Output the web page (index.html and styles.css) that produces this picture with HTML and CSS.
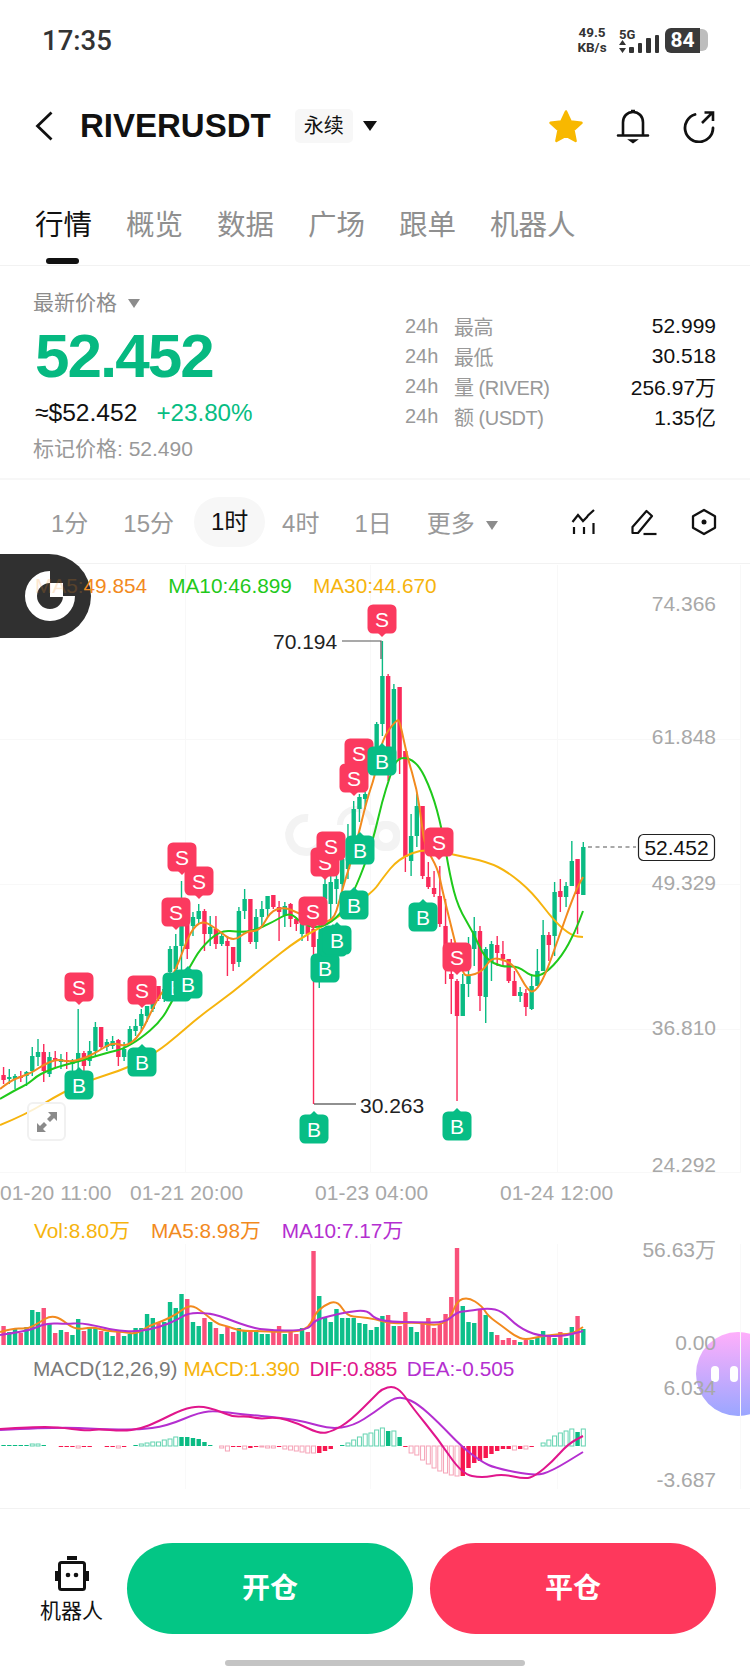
FILE: index.html
```html
<!DOCTYPE html>
<html lang="zh-CN">
<head>
    <meta charset="UTF-8">
    <meta name="viewport" content="width=device-width, initial-scale=1.0">
    <title>RIVERUSDT</title>
    <link rel="stylesheet" href="styles.css">
</head>
<body>
    <div class="statusbar">
        <span class="clock">17:35</span>
        <div class="status-right">
            <div class="netspeed"><span>49.5</span><span>KB/s</span></div>
            <div class="cell">
                <span class="cell-label">5G</span>
                <div class="cell-row">
                    <svg width="7" height="13" viewBox="0 0 7 13"><path d="M3.5 0 7 5H0zM0 8h7l-3.500 5z" fill="#333"/></svg>
                    <i class="sig s1"></i><i class="sig s2"></i><i class="sig s3"></i><i class="sig s4"></i>
                </div>
            </div>
            <div class="battery"><span class="battery-fill">84</span><span class="battery-rest"></span></div>
        </div>
    </div>

    <header class="header">
        <svg class="back" width="18" height="30" viewBox="0 0 18 30"><path d="M16.500 1.500 2.500 15l14 13.500" fill="none" stroke="#111" stroke-width="2.800"/></svg>
        <h1 class="symbol">RIVERUSDT</h1>
        <span class="tag">永续</span>
        <i class="caret"></i>
        <div class="header-icons">
            <svg width="36" height="34" viewBox="0 0 36 34"><path d="M18 2.500l4.700 10 10.800 1.300-8 7.400 2.100 10.800L18 26.700 8.400 32l2.100-10.800-8-7.400 10.800-1.300z" fill="#f8b800" stroke="#f8b800" stroke-width="2.500" stroke-linejoin="round"/></svg>
            <svg width="34" height="36" viewBox="0 0 34 36"><path d="M7 27V14.500C7 8.500 11 4 17 4s10 4.500 10 10.500V27M2 27.500h30" fill="none" stroke="#111" stroke-width="2.600" stroke-linecap="round"/><path d="M15 2.500h4M13.500 32h7l-3.500 2.500z" fill="#111" stroke="#111" stroke-width="1.500"/></svg>
            <svg width="34" height="34" viewBox="0 0 34 34"><path d="M13 5.500A14 14 0 1 0 31 19" fill="none" stroke="#111" stroke-width="2.800" stroke-linecap="round"/><path d="M20 14 30 4M22.500 3.500h8.500v8.500" fill="none" stroke="#111" stroke-width="2.600"/></svg>
        </div>
    </header>

    <nav class="tabs">
        <a class="tab active">行情</a>
        <a class="tab">概览</a>
        <a class="tab">数据</a>
        <a class="tab">广场</a>
        <a class="tab">跟单</a>
        <a class="tab">机器人</a>
    </nav>

    <section class="summary">
        <div class="price-col">
            <div class="price-label">最新价格 <i class="caret small"></i></div>
            <div class="price">52.452</div>
            <div class="price-sub"><span>≈$52.452</span><span class="up">+23.80%</span></div>
            <div class="mark">标记价格: 52.490</div>
        </div>
        <div class="stats">
            <div class="stat"><span class="stat-h">24h</span><span class="stat-name">最高</span><span class="stat-val">52.999</span></div>
            <div class="stat"><span class="stat-h">24h</span><span class="stat-name">最低</span><span class="stat-val">30.518</span></div>
            <div class="stat"><span class="stat-h">24h</span><span class="stat-name">量 (RIVER)</span><span class="stat-val">256.97万</span></div>
            <div class="stat"><span class="stat-h">24h</span><span class="stat-name">额 (USDT)</span><span class="stat-val">1.35亿</span></div>
        </div>
    </section>

    <section class="intervals">
        <a class="interval i1">1分</a>
        <a class="interval i2">15分</a>
        <a class="interval i3 active">1时</a>
        <a class="interval i4">4时</a>
        <a class="interval i5">1日</a>
        <a class="interval i6">更多 <i class="caret small"></i></a>
        <div class="tools">
            <svg width="26" height="26" viewBox="0 0 26 26"><path d="M1.500 13 7 6l5 6 4-4 1-1.500L23 1" fill="none" stroke="#111" stroke-width="2.200"/><path d="M3 18v7M13 18v7M22.500 14v11" stroke="#111" stroke-width="2.200"/></svg>
            <svg width="28" height="28" viewBox="0 0 28 28"><path d="M2.500 25v-6L16.500 3l5.500 5-14 17z" fill="none" stroke="#111" stroke-width="2.200" stroke-linejoin="round"/><path d="M13.500 26h13" stroke="#111" stroke-width="2.200"/></svg>
            <svg width="26" height="28" viewBox="0 0 26 28"><path d="M13 2 24 8.300v11.400L13 26 2 19.700V8.300z" fill="none" stroke="#111" stroke-width="2.300" stroke-linejoin="round"/><circle cx="13" cy="14" r="2.500" fill="#111"/></svg>
        </div>
    </section>

    <section class="chart" id="chart">
        <svg class="canvas" id="canvas" width="750" height="944" viewBox="0 565 750 944"></svg>
        <div class="side-btn">
            <svg width="60" height="60" viewBox="0 0 60 60"><path d="M30 11A19 19 0 1 0 49 30" fill="none" stroke="#fff" stroke-width="12"/><rect x="30" y="17" width="13" height="14" fill="#fff"/></svg>
        </div>
        <div class="legend legend-ma">
            <span class="c-ma5"><span class="dim">MA5:</span>49.854</span><span class="c-ma10">MA10:46.899</span><span class="c-ma30">MA30:44.670</span>
        </div>
        <div class="legend legend-vol">
            <span class="c-vol">Vol:8.80万</span><span class="c-ma5">MA5:8.98万</span><span class="c-purple">MA10:7.17万</span>
        </div>
        <div class="legend legend-macd">
            <span class="c-grey">MACD(12,26,9)</span><span class="c-vol">MACD:1.390</span><span class="c-dif">DIF:0.885</span><span class="c-purple">DEA:-0.505</span>
        </div>
        <div class="expand">
            <svg width="22" height="22" viewBox="0 0 22 22"><path d="M12 1h9v9l-3-3-4 4-3-3 4-4zM10 21H1v-9l3 3 4-4 3 3-4 4z" fill="#8a8a8a"/></svg>
        </div>
        <div class="bubble"><i></i><i></i></div>
    </section>

    <footer class="actions">
        <div class="robot">
            <svg width="34" height="36" viewBox="0 0 34 36"><rect x="12" y="1" width="10" height="4" fill="#111"/><rect x="4.500" y="7.500" width="25" height="27" rx="2" fill="none" stroke="#111" stroke-width="3"/><path d="M1.500 16v10M32.500 16v10" stroke="#111" stroke-width="3"/><circle cx="13" cy="20" r="2.300" fill="#111"/><circle cx="21" cy="20" r="2.300" fill="#111"/></svg>
            <span>机器人</span>
        </div>
        <a class="trade open">开仓</a>
        <a class="trade close">平仓</a>
    </footer>
    <div class="homebar"></div>

    <script src="chart.js"></script>
</body>
</html>
```

FILE: styles.css
```css
* {
    box-sizing: border-box;
}
body {
    margin: 0;
    width: 750px;
    height: 1667px;
    overflow: hidden;
    background-color: #fff;
    color: #111;
    font-family: "Liberation Sans", "Noto Sans CJK SC", sans-serif;
    position: relative;
}
.statusbar {
    height: 80px;
    padding: 0 42px;
    display: flex;
    justify-content: space-between;
    align-items: center;
}
.clock {
    font-family: Roboto, sans-serif;
    font-size: 27.500px;
    font-weight: 500;
    color: #333;
}
.status-right {
    display: flex;
    align-items: center;
}
.netspeed {
    display: flex;
    flex-direction: column;
    align-items: center;
    font-family: Roboto, sans-serif;
    font-size: 13.500px;
    font-weight: 700;
    line-height: 15px;
    color: #333;
    width: 30px;
}
.cell {
    margin-left: 12px;
    width: 42px;
}
.cell-label {
    display: block;
    font-family: Roboto, sans-serif;
    font-size: 13px;
    font-weight: 700;
    line-height: 13px;
    color: #333;
}
.cell-row {
    display: flex;
    align-items: flex-end;
    gap: 4px;
    height: 13px;
    margin-top: -1px;
}
.cell-row svg {
    margin-right: -1px;
}
.sig {
    display: block;
    width: 4.500px;
    background-color: #333;
    border-radius: 1px;
}
.s1 { height: 6px; }
.s2 { height: 10px; }
.s3 { height: 15px; }
.s4 { height: 18px; }
.battery {
    display: flex;
    align-items: center;
    margin-left: 4px;
}
.battery-fill {
    width: 35px;
    height: 25px;
    background-color: #3a3a3a;
    border-radius: 6px 0 0 6px;
    color: #fff;
    font-family: Roboto, sans-serif;
    font-size: 21px;
    font-weight: 700;
    line-height: 25px;
    text-align: center;
}
.battery-rest {
    width: 8px;
    height: 22px;
    background-color: #bdbdbd;
    border-radius: 0 6px 6px 0;
}
.header {
    height: 92px;
    padding: 0 34px 0 35px;
    display: flex;
    align-items: center;
}
.back {
    margin-right: 27px;
}
.symbol {
    margin: 0;
    font-size: 33px;
    font-weight: 700;
    letter-spacing: 0;
}
.tag {
    margin-left: 24px;
    width: 58px;
    height: 34px;
    line-height: 34px;
    text-align: center;
    background-color: #f7f7f7;
    border-radius: 5px;
    font-size: 20px;
}
.caret {
    display: inline-block;
    width: 0;
    height: 0;
    border-left: 7px solid transparent;
    border-right: 7px solid transparent;
    border-top: 10px solid #111;
}
.header .caret {
    margin-left: 10px;
}
.caret.small {
    border-left-width: 6.500px;
    border-right-width: 6.500px;
    border-top: 9px solid #8c8c8c;
    margin-left: 5px;
    vertical-align: 2px;
}
.header-icons {
    margin-left: auto;
    display: flex;
    align-items: center;
    gap: 32px;
}
.tabs {
    height: 94px;
    padding: 35px 0 0 35px;
    display: flex;
    gap: 34px;
    border-bottom: 1px solid #f2f2f2;
}
.tab {
    position: relative;
    font-size: 28.500px;
    line-height: 36px;
    color: #8f8f8f;
}
.tab.active {
    color: #111;
}
.tab.active::after {
    content: "";
    position: absolute;
    left: 11px;
    top: 51px;
    width: 33px;
    height: 6px;
    border-radius: 3px;
    background-color: #111;
}
.summary {
    height: 214px;
    padding-left: 33px;
    display: flex;
    border-bottom: 2px solid #f7f7f7;
}
.price-col {
    width: 372px;
    padding-top: 24px;
}
.price-label {
    font-size: 21px;
    line-height: 26px;
    color: #8c8c8c;
}
.price {
    margin: 8px 0 0 2px;
    font-size: 62px;
    font-weight: 700;
    line-height: 64px;
    letter-spacing: -2px;
    color: #06b981;
}
.price-sub {
    margin: 10px 0 0 2px;
    display: flex;
    gap: 19px;
    font-size: 24.600px;
    line-height: 30px;
}
.up {
    font-size: 24.200px;
    color: #07bd83;
}
.mark {
    margin-top: 8px;
    font-size: 21px;
    line-height: 26px;
    color: #999;
}
.stats {
    width: 311px;
    padding-top: 45px;
}
.stat {
    height: 30px;
    display: flex;
    align-items: center;
    font-size: 20px;
}
.stat-h {
    width: 49px;
    color: #999;
}
.stat-name {
    color: #999;
    letter-spacing: -0.5px;
}
.stat-val {
    margin-left: auto;
    font-size: 21px;
    color: #111;
}
.intervals {
    height: 84px;
    display: flex;
    align-items: center;
    padding: 0 33px 0 0;
    border-bottom: 1px solid #f2f2f2;
}
.interval {
    font-size: 24px;
    color: #999;
    text-align: center;
}
.i1 { margin-left: 51px; }
.i2 { margin-left: 35px; }
.i3 {
    margin-left: 20px;
    width: 71px;
    height: 50px;
    line-height: 50px;
    border-radius: 25px;
    background-color: #f7f7f7;
}
.i3.active {
    color: #111;
}
.i4 { margin-left: 17px; }
.i5 { margin-left: 35px; }
.i6 { margin-left: 35px; }
.tools {
    margin-left: auto;
    display: flex;
    align-items: center;
    gap: 33px;
}
.chart {
    position: relative;
    height: 944px;
}
.canvas {
    position: absolute;
    left: 0;
    top: 0;
}
.canvas text {
    font-family: "Liberation Sans", "Noto Sans CJK SC", sans-serif;
}
.legend {
    position: absolute;
    left: 35px;
    display: flex;
    font-size: 20.800px;
    line-height: 26px;
}
.legend-ma {
    top: 9px;
    gap: 21px;
}
.legend-vol {
    top: 654px;
    left: 34px;
    gap: 21px;
}
.legend-macd {
    top: 792px;
    left: 33px;
    gap: 6px;
}
.legend-macd .c-vol {
    letter-spacing: -0.3px;
}
.legend-macd .c-dif {
    margin-left: 4px;
    letter-spacing: -0.45px;
}
.legend-macd .c-purple {
    margin-left: 4px;
}
.dim {
    opacity: 0.2;
}
.c-ma5 { color: #f28a1e; }
.c-ma10 { color: #1fc91b; }
.c-ma30, .c-vol { color: #f6b40e; }
.c-purple { color: #b42fd0; }
.c-grey { color: #7a7a7a; }
.c-dif { color: #e0168c; }
.side-btn {
    position: absolute;
    left: 0;
    top: -10px;
    width: 91px;
    height: 84px;
    padding: 12px 0 0 20px;
    background-color: #303030;
    border-radius: 0 42px 42px 0;
}
.expand {
    position: absolute;
    left: 27px;
    top: 538px;
    width: 39px;
    height: 39px;
    display: flex;
    align-items: center;
    justify-content: center;
    background-color: rgba(255, 255, 255, 0.8);
    border: 2px solid #f1f1f1;
    border-radius: 6px;
}
.bubble {
    position: absolute;
    left: 696px;
    top: 768px;
    width: 84px;
    height: 84px;
    padding-left: 15px;
    display: flex;
    align-items: center;
    gap: 11px;
    border-radius: 50%;
    background: linear-gradient(#ffaffb, #9aa6ff);
    z-index: -1;
}
.bubble i {
    width: 8px;
    height: 16px;
    border-radius: 4px;
    background-color: #fff;
}
.actions {
    height: 158px;
    padding: 34px 33px 0 0;
    display: flex;
    align-items: flex-start;
    border-top: 1px solid #f2f2f2;
}
.robot {
    width: 127px;
    display: flex;
    flex-direction: column;
    align-items: center;
    padding-top: 12px;
    font-size: 21px;
    line-height: 26px;
    margin-left: 8px;
    margin-right: -8px;
}
.robot svg {
    margin: 0 0 7px 0;
}
.trade {
    width: 286px;
    height: 91px;
    line-height: 91px;
    text-align: center;
    border-radius: 46px;
    color: #fff;
    font-size: 28px;
    font-weight: 700;
}
.trade.open {
    background-color: #03c685;
}
.trade.close {
    background-color: #fe385c;
    margin-left: 17px;
}
.homebar {
    position: absolute;
    left: 225px;
    bottom: 1px;
    width: 300px;
    height: 6px;
    border-radius: 3px;
    background-color: #c4c4c4;
}
```

FILE: chart.js
```js
// all y values here are page pixels, the svg viewBox starts at the chart top
const canvas = document.getElementById('canvas');
const NS = 'http://www.w3.org/2000/svg';

const GREEN = '#0abb83';
const RED = '#fa2a5a';

function add(tag, attrs, text) {
    const el = document.createElementNS(NS, tag);
    for (const k in attrs) el.setAttribute(k, attrs[k]);
    if (text) el.textContent = text;
    canvas.appendChild(el);
    return el;
}

function xAt(i) {
    return 583.3 - (102 - i) * 5.74;
}

function line(points, color, width) {
    // smooth a little so the averages do not look like zigzags
    let d = 'M' + points[0].join(' ');
    for (let i = 1; i < points.length - 1; i++) {
        const mx = (points[i][0] + points[i + 1][0]) / 2;
        const my = (points[i][1] + points[i + 1][1]) / 2;
        d += ` Q${points[i][0]} ${points[i][1]} ${mx} ${my}`;
    }
    d += ' L' + points[points.length - 1].join(' ');
    add('path', { d, fill: 'none', stroke: color, 'stroke-width': width, 'stroke-linejoin': 'round' });
}

// wick top, body top, body bottom, wick bottom, colour
const candles = [
    [1076,1078,1082,1090,'g'],[1068,1076,1081,1085,'r'],[1070,1078,1080,1085,'g'],[1075,1077,1080,1090,'g'],
    [1072,1077,1079,1083,'r'],[1072,1073,1077,1087,'g'],[1048,1057,1072,1077,'g'],[1040,1053,1058,1067,'g'],
    [1045,1053,1072,1083,'r'],[1053,1058,1075,1078,'g'],[1052,1059,1062,1068,'r'],[1055,1060,1063,1070,'g'],
    [1053,1061,1063,1070,'r'],[1060,1062,1065,1072,'g'],[1010,1054,1062,1072,'g'],[1052,1054,1067,1072,'r'],
    [1042,1052,1062,1067,'g'],[1023,1028,1052,1057,'g'],[1028,1028,1048,1050,'r'],[1040,1043,1048,1052,'g'],
    [1037,1042,1047,1050,'g'],[1040,1041,1058,1067,'r'],[1043,1050,1058,1062,'g'],[1027,1030,1045,1045,'g'],
    [1020,1027,1032,1037,'g'],[1010,1015,1027,1033,'g'],[1007,1007,1017,1023,'g'],[993,995,1010,1013,'g'],
    [987,987,1000,1002,'r'],[985,990,1000,1003,'g'],[947,950,973,975,'g'],[935,947,970,975,'g'],
    [882,927,947,975,'g'],[910,913,950,960,'r'],[913,918,927,937,'g'],[905,912,920,925,'g'],
    [910,912,935,952,'r'],[917,928,935,947,'g'],[917,930,945,950,'r'],[935,937,945,947,'g'],
    [937,942,947,977,'r'],[948,948,965,972,'r'],[908,912,963,968,'g'],[890,900,912,920,'g'],
    [900,900,943,945,'r'],[910,918,943,950,'g'],[902,910,918,928,'g'],[897,897,910,918,'g'],
    [896,896,908,910,'r'],[902,908,913,942,'r'],[903,907,917,928,'g'],[904,905,920,928,'r'],
    [918,920,925,932,'r'],[920,925,935,942,'g'],[917,927,935,942,'r'],[927,930,948,1105,'r'],
    [920,940,965,989,'g'],[870,885,900,915,'g'],[860,883,905,920,'g'],[875,880,890,905,'g'],
    [855,860,885,905,'g'],[825,840,870,880,'g'],[802,810,837,850,'g'],[795,798,810,823,'g'],
    [793,795,800,810,'g'],[745,750,770,775,'g'],[723,725,748,752,'g'],[642,677,725,737,'g'],
    [675,677,765,782,'r'],[685,690,760,772,'g'],[688,688,760,775,'r'],[752,752,858,873,'r'],
    [815,837,862,877,'g'],[795,807,837,848,'g'],[807,807,877,880,'r'],[863,878,888,890,'r'],
    [872,889,895,898,'r'],[867,897,925,928,'r'],[900,927,947,985,'r'],[940,975,980,1015,'r'],
    [980,982,1017,1102,'r'],[975,985,1017,1017,'g'],[938,977,985,998,'g'],[918,932,950,967,'g'],
    [927,932,997,1012,'r'],[948,950,998,1024,'g'],[942,945,963,982,'g'],[937,946,954,967,'r'],
    [942,955,960,967,'r'],[960,960,982,984,'r'],[972,982,997,997,'r'],[988,993,997,1003,'g'],
    [990,994,1008,1017,'r'],[977,987,1010,1011,'g'],[950,972,987,987,'g'],[921,936,972,972,'g'],
    [933,936,946,962,'r'],[883,893,937,957,'g'],[880,892,898,913,'r'],[883,887,898,908,'g'],
    [842,862,887,887,'g'],[860,860,895,935,'r'],[843,848,896,896,'g']
];

// top of each volume bar
const volumes = [
    1328,1327,1333,1330,1334,1328,1311,1313,1309,1325,1334,1331,1333,1336,1320,1332,1329,1329,1332,1333,
    1337,1333,1337,1335,1329,1329,1315,1319,1324,1323,1303,1309,1295,1300,1323,1327,1319,1323,1329,1335,
    1327,1333,1329,1331,1331,1331,1335,1335,1331,1327,1335,1333,1335,1329,1333,1252,1297,1319,1323,1310,
    1319,1319,1319,1324,1325,1331,1328,1317,1316,1327,1327,1313,1328,1333,1325,1319,1329,1325,1315,1298,
    1249,1307,1323,1324,1310,1316,1333,1336,1341,1339,1341,1343,1341,1341,1339,1332,1337,1339,1333,1339,
    1328,1317,1330
];

// macd bars: height (+ up), filled?
const macd = [
    [1,1],[1,1],[1,1],[1,1],[1,1],[1,1],[2,0],[2,0],[1,1],[0,0],[0,0],[-1,1],[-1,1],[-1,1],[-2,0],[-1,1],
    [-1,1],[0,0],[0,0],[-1,1],[-1,1],[-2,0],[-1,1],[0,0],[1,1],[2,0],[3,0],[4,0],[4,0],[6,0],[7,0],[9,0],
    [9,1],[9,1],[8,1],[7,1],[4,1],[1,1],[0,0],[-2,0],[-5,0],[-1,1],[-1,1],[-3,0],[-2,1],[-1,1],[-1,0],
    [-2,0],[-2,0],[-1,1],[-3,0],[-4,0],[-5,0],[-6,0],[-7,0],[-7,0],[-7,1],[-5,1],[-3,1],[0,0],[1,1],[3,0],
    [6,0],[9,0],[12,0],[13,0],[16,0],[18,0],[15,1],[15,0],[9,1],[-1,1],[-7,0],[-9,0],[-14,0],[-18,0],
    [-22,0],[-25,0],[-27,0],[-29,0],[-30,0],[-30,1],[-22,1],[-17,1],[-15,1],[-12,1],[-8,1],[-5,1],[-3,1],
    [-3,1],[-4,0],[-3,1],[-3,0],[-1,1],[0,0],[3,0],[6,0],[10,0],[13,0],[15,0],[17,0],[14,1],[17,0]
];

const ma5 = [[0,1090],[10,1082],[23,1077],[33,1073],[43,1066],[57,1060],[68,1063],[83,1060],[97,1053],[113,1043],[125,1048],[140,1037],[157,1000],[170,983],[180,960],[190,933],[202,921],[217,930],[233,943],[247,932],[260,932],[270,913],[283,908],[297,913],[313,923],[333,923],[340,900],[343,888],[355,850],[367,800],[375,777],[382,740],[397,720],[400,723],[407,757],[417,790],[422,827],[425,847],[438,870],[442,890],[455,943],[463,975],[468,977],[482,973],[492,958],[507,962],[515,968],[528,992],[535,993],[545,977],[557,943],[575,893],[583,878]];
const ma10 = [[0,1100],[17,1090],[28,1085],[37,1077],[45,1073],[57,1068],[80,1062],[93,1058],[110,1053],[123,1050],[140,1040],[160,1023],[172,1003],[182,980],[190,968],[200,950],[220,931],[240,933],[253,932],[273,923],[290,913],[300,923],[317,930],[337,920],[353,895],[367,860],[375,833],[382,803],[390,777],[398,757],[417,762],[432,793],[442,830],[450,877],[458,908],[473,933],[485,960],[502,968],[518,967],[532,978],[545,975],[562,957],[575,933],[583,912]];
const ma30 = [[0,1126],[25,1116],[63,1093],[93,1080],[128,1069],[157,1053],[177,1037],[200,1017],[233,993],[263,968],[300,939],[333,922],[373,893],[382,880],[398,860],[425,849],[455,856],[488,863],[508,873],[532,893],[555,923],[572,937],[583,938]];
const volMa5 = [[0,1333],[13,1329],[28,1330],[40,1323],[50,1317],[60,1319],[75,1331],[93,1328],[107,1332],[123,1333],[137,1335],[148,1327],[163,1322],[177,1315],[190,1305],[203,1313],[217,1325],[227,1327],[240,1332],[260,1332],[277,1333],[307,1332],[315,1315],[323,1307],[337,1301],[347,1317],[360,1318],[375,1320],[392,1325],[415,1323],[438,1327],[450,1320],[457,1302],[468,1298],[482,1307],[488,1317],[502,1327],[515,1337],[525,1341],[542,1337],[562,1335],[572,1335],[583,1328]];
const volMa10 = [[0,1336],[27,1332],[37,1328],[48,1324],[67,1325],[80,1324],[97,1327],[113,1331],[137,1333],[160,1328],[177,1321],[188,1314],[207,1314],[220,1317],[233,1322],[247,1327],[263,1331],[307,1332],[315,1321],[330,1317],[347,1313],[367,1311],[375,1320],[392,1323],[415,1323],[445,1324],[457,1313],[468,1312],[488,1309],[502,1312],[518,1328],[538,1337],[562,1337],[572,1335],[583,1332]];
const dif = [[0,1430],[33,1428],[57,1428],[87,1432],[97,1430],[123,1432],[140,1430],[157,1423],[183,1410],[200,1407],[217,1411],[233,1418],[247,1417],[260,1420],[277,1418],[297,1424],[320,1435],[333,1432],[350,1422],[375,1397],[382,1390],[393,1387],[402,1393],[412,1408],[438,1440],[462,1475],[482,1479],[502,1475],[525,1480],[535,1477],[552,1463],[568,1445],[583,1437]];
const dea = [[0,1431],[57,1428],[100,1430],[137,1431],[167,1427],[200,1413],[217,1412],[240,1415],[283,1419],[307,1423],[330,1430],[353,1427],[375,1413],[392,1400],[403,1398],[418,1405],[438,1423],[462,1448],[482,1463],[495,1469],[535,1477],[552,1472],[583,1453]];

// x, y, letter. order matters, later ones sit on top
const marks = [
    [382,620,'S'],[359,754,'S'],[354,779,'S'],[325,863,'S'],[331,847,'S'],[182,858,'S'],[199,882,'S'],
    [176,913,'S'],[79,988,'S'],[177,988,'B'],[188,985,'B'],[142,991,'S'],[79,1086,'B'],[142,1063,'B'],
    [314,1130,'B'],[325,969,'B'],[333,943,'B'],[337,941,'B'],[313,912,'S'],[354,906,'B'],[360,851,'B'],[382,762,'B'],
    [423,918,'B'],[439,843,'S'],[457,958,'S'],[457,1127,'B']
];

function drawGrid() {
    [740, 885, 1030, 1173].forEach(y => {
        add('rect', { x: 0, y, width: 740, height: 1, fill: '#f8f8f8' });
    });
    [185, 370, 557, 740].forEach(x => {
        add('rect', { x, y: 566, width: 1, height: 608, fill: '#f8f8f8' });
        add('rect', { x, y: 1245, width: 1, height: 245, fill: '#f9f9f9' });
    });
    // watermark
    add('path', { d: 'M308 819A17 17 0 1 0 320 846', fill: 'none', stroke: '#f3f3f3', 'stroke-width': 8 });
    add('path', { d: 'M340 826A14 14 0 0 1 372 826', fill: 'none', stroke: '#f3f3f3', 'stroke-width': 6 });
    add('rect', { x: 372, y: 822, width: 28, height: 30, rx: 12, fill: '#f3f3f3' });
    add('circle', { cx: 386, cy: 837, r: 7, fill: '#fff' });
}

function drawCandles() {
    candles.forEach((c, i) => {
        const x = xAt(i);
        const color = c[4] === 'g' ? GREEN : RED;
        add('rect', { x: x - 0.7, y: c[0], width: 1.4, height: c[3] - c[0], fill: color });
        add('rect', { x: x - 2.2, y: c[1], width: 4.4, height: Math.max(c[2] - c[1], 2), fill: color });
    });
    line(ma30, '#f6b40e', 2);
    line(ma10, '#1fc91b', 2);
    line(ma5, '#f28a1e', 2);
}

function drawCallouts() {
    add('path', { d: 'M342 642H381V660', fill: 'none', stroke: '#555', 'stroke-width': 1.2 });
    add('path', { d: 'M314 1105H356', fill: 'none', stroke: '#222', 'stroke-width': 1.2 });
    add('text', { x: 273, y: 650, 'font-size': 21, fill: '#222' }, '70.194');
    add('text', { x: 360, y: 1114, 'font-size': 21, fill: '#222' }, '30.263');
    add('path', { d: 'M588 848H636', stroke: '#555', 'stroke-width': 1.2, 'stroke-dasharray': '4 3.500' });
    add('rect', { x: 638.500, y: 835.500, width: 76, height: 26, rx: 5, fill: '#fff', stroke: '#222', 'stroke-width': 1.2 });
    add('text', { x: 676.500, y: 856, 'font-size': 21, fill: '#111', 'text-anchor': 'middle' }, '52.452');
}

function drawMarks() {
    marks.forEach(m => {
        const [x, y, letter] = m;
        const color = letter === 'S' ? '#fb3a5f' : '#07bd85';
        add('rect', { x: x - 14.5, y: y - 14.5, width: 29, height: 29, rx: 5.5, fill: color });
        const tip = letter === 'S' ? `M${x - 4} ${y + 14}h8l-4 4z` : `M${x - 4} ${y - 14}h8l-4 -4z`;
        add('path', { d: tip, fill: color });
        add('text', { x, y: y + 7.5, 'font-size': 21, fill: '#fff', 'text-anchor': 'middle' }, letter);
    });
}

function drawVolume() {
    volumes.forEach((top, i) => {
        const color = candles[i][4] === 'g' ? '#0dbf8a' : '#f9507a';
        add('rect', { x: xAt(i) - 2.2, y: top, width: 4.4, height: 1346 - top, fill: color });
    });
    line(volMa5, '#f28a1e', 2);
    line(volMa10, '#b42fd0', 2);
}

function drawMacd() {
    const zero = 1447;
    macd.forEach((m, i) => {
        const h = m[0];
        const up = h >= 0;
        if (h === 0) return;
        const x = xAt(i);
        const y = up ? zero - h : zero;
        const hh = Math.abs(h);
        if (m[1]) {
            add('rect', { x: x - 2.2, y, width: 4.4, height: hh, fill: up ? '#0abb83' : '#f7174f' });
        } else {
            add('rect', {
                x: x - 2, y, width: 4, height: hh, fill: '#fff',
                stroke: up ? '#63d3b0' : '#f5a3b7', 'stroke-width': 1
            });
        }
    });
    line(dea, '#b42fd0', 2);
    line(dif, '#e0168c', 2);
}

function drawAxis() {
    const right = [
        ['74.366', 604], ['61.848', 737], ['49.329', 883], ['36.810', 1028], ['24.292', 1165],
        ['56.63万', 1250], ['0.00', 1343], ['6.034', 1388], ['-3.687', 1480]
    ];
    right.forEach(r => {
        add('text', { x: 716, y: r[1] + 7.5, 'font-size': 21, fill: '#a8a8a8', 'text-anchor': 'end' }, r[0]);
    });
    [['01-20 11:00', 0], ['01-21 20:00', 130], ['01-23 04:00', 315], ['01-24 12:00', 500]].forEach(t => {
        add('text', { x: t[1], y: 1201, 'font-size': 21, 'letter-spacing': 0.1, fill: '#a8a8a8' }, t[0]);
    });
}

drawGrid();
drawCandles();
drawCallouts();
drawMarks();
drawVolume();
drawMacd();
drawAxis();
```
